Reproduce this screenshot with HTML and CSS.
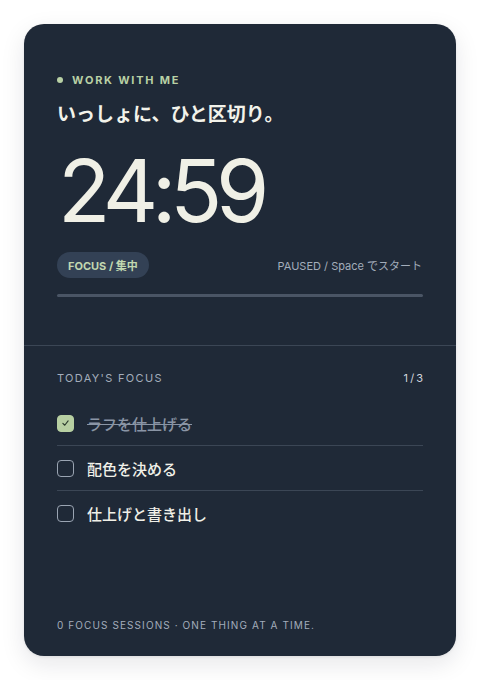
FILE: index.html
```html
<!DOCTYPE html>
<html lang="ja">
<head>
<meta charset="utf-8">
<title>Work with me</title>
<link rel="stylesheet" href="styles.css">
</head>
<body>
<main class="card">
  <section class="timer-section">
    <div class="eyebrow"><span class="dot"></span>WORK WITH ME</div>
    <h1 class="title">いっしょに、ひと区切り。</h1>
    <div class="clock">24:59</div>
    <div class="status-row">
      <span class="pill">FOCUS / 集中</span>
      <span class="status">PAUSED / Space でスタート</span>
    </div>
    <div class="progress"><div class="progress-fill" style="width:0%"></div></div>
  </section>
  <section class="focus-section">
    <div class="focus-head">
      <span class="label">TODAY'S FOCUS</span>
      <span class="count">1 / 3</span>
    </div>
    <ul class="tasks">
      <li class="task done">
        <span class="box checked"><svg viewBox="0 0 16 16" width="16" height="16"><path d="M5.2 8.4 L7.2 10.4 L10.8 5.8" fill="none" stroke="#2a3a2c" stroke-width="1.2" stroke-linecap="round" stroke-linejoin="round"/></svg></span>
        <span class="task-text">ラフを仕上げる</span>
      </li>
      <li class="task">
        <span class="box"></span>
        <span class="task-text">配色を決める</span>
      </li>
      <li class="task">
        <span class="box"></span>
        <span class="task-text">仕上げと書き出し</span>
      </li>
    </ul>
    <footer class="footer">0 FOCUS SESSIONS · ONE THING AT A TIME.</footer>
  </section>
</main>
</body>
</html>
```
FILE: styles.css
```css
* { box-sizing: border-box; }
html, body { margin: 0; padding: 0; background: #ffffff; }
body {
  padding: 24px;
  font-family: Inter, "Noto Sans CJK JP", sans-serif;
  color: #f0f0e8;
}
.card {
  width: 432px;
  height: 632px;
  background: #1f2937;
  border-radius: 20px;
  box-shadow: 0 8px 24px rgba(15, 23, 42, 0.10), 0 1px 3px rgba(15, 23, 42, 0.08);
  display: flex;
  flex-direction: column;
  overflow: hidden;
}
.timer-section {
  padding: 48px 33px 48px 33px;
  border-bottom: 1px solid #3b4655;
}
.eyebrow {
  display: flex;
  align-items: center;
  gap: 9px;
  font-size: 11px;
  line-height: 16px;
  font-weight: 700;
  letter-spacing: 0.16em;
  color: #b9d1a5;
}
.dot {
  width: 6px;
  height: 6px;
  border-radius: 50%;
  background: #b9d1a5;
}
.title {
  margin: 12px 0 0;
  font-size: 19px;
  line-height: 26px;
  font-weight: 700;
  color: #f2f2ea;
  font-family: "Noto Sans CJK JP", sans-serif;
}
.clock {
  margin-top: 22px;
  font-size: 86px;
  line-height: 86px;
  font-weight: 400;
  letter-spacing: -0.075em;
  color: #f0f0e6;
  padding-left: 1px;
}
.status-row {
  margin-top: 18px;
  display: flex;
  justify-content: space-between;
  align-items: center;
}
.pill {
  height: 26px;
  padding: 0 11px;
  border-radius: 13px;
  background: #334155;
  color: #c2d8b0;
  font-size: 11px;
  font-weight: 700;
  display: inline-flex;
  align-items: center;
}
.status {
  font-size: 11px;
  color: #a3adbb;
  padding-right: 1px;
}
.progress {
  margin-top: 16px;
  height: 3px;
  border-radius: 2px;
  background: #4a5565;
}
.progress-fill { height: 100%; background: #b9d1a5; }
.focus-section {
  flex: 1;
  display: flex;
  flex-direction: column;
  padding: 24px 33px 24px 33px;
}
.focus-head {
  display: flex;
  justify-content: space-between;
  font-size: 11px;
  line-height: 16px;
  letter-spacing: 0.12em;
  color: #a3adbb;
}
.count { color: #cfd5dd; letter-spacing: 0; word-spacing: -1px; }
.tasks {
  list-style: none;
  margin: 15px 0 0;
  padding: 0;
}
.task {
  height: 45px;
  display: flex;
  align-items: center;
  gap: 13px;
  border-bottom: 1px solid #3b4655;
  font-family: "Noto Sans CJK JP", sans-serif;
  font-size: 15px;
  font-weight: 500;
  color: #f0f0e8;
}
.task:last-child { border-bottom: none; }
.box {
  width: 17px;
  height: 17px;
  border: 1.5px solid #9aa4b2;
  border-radius: 4px;
  flex: none;
  display: flex;
  align-items: center;
  justify-content: center;
}
.box.checked { background: #b7cfa2; border-color: #b7cfa2; }
.task.done .task-text {
  color: #8a95a5;
  text-decoration: line-through;
}
.footer {
  margin-top: auto;
  font-size: 10px;
  line-height: 14px;
  letter-spacing: 0.11em;
  color: #a3adbb;
}
```
